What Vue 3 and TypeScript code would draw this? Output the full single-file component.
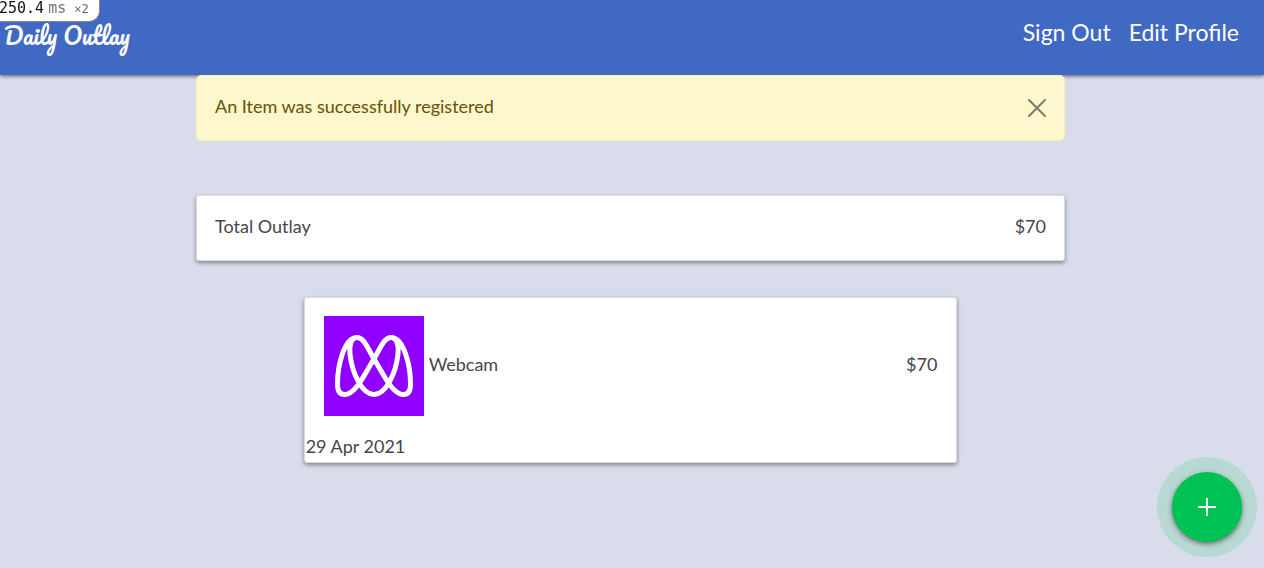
<script setup lang="ts">
import { ref } from 'vue'

interface Outlay {
  name: string
  amount: number
  date: string
}

const noticeOpen = ref(true)
const outlays: Outlay[] = [{ name: 'Webcam', amount: 70, date: '29 Apr 2021' }]
const total = outlays.reduce((sum, item) => sum + item.amount, 0)
</script>

<template>
  <div class="page">
    <div class="profiler">
      <span>250.4</span>
      <span class="unit">ms</span>
      <span class="count">×2</span>
    </div>

    <header class="navbar">
      <a class="brand" href="#">Daily Outlay</a>
      <nav class="links">
        <a href="#">Sign Out</a>
        <a href="#">Edit Profile</a>
      </nav>
    </header>

    <main class="content">
      <div v-if="noticeOpen" class="notice" role="alert">
        <span>An Item was successfully registered</span>
        <button class="close" type="button" aria-label="Close" @click="noticeOpen = false">
          <svg viewBox="0 0 18 18" aria-hidden="true">
            <path d="M1 1L17 17M17 1L1 17" />
          </svg>
        </button>
      </div>

      <section class="card total">
        <span>Total Outlay</span>
        <span>${{ total }}</span>
      </section>

      <article v-for="item in outlays" :key="item.name" class="card item">
        <div class="item-row">
          <svg class="picture" viewBox="0 0 100 100" aria-hidden="true">
            <rect width="100" height="100" fill="#8f00ff" />
            <path
              d="M33 21.5C20 21.5 13.5 50 13.5 68C13.5 75 16 78.5 20.5 78.5C32 78.5 41 57 50 43C57 31 60 21.5 67 21.5C80 21.5 86.5 50 86.5 68C86.5 75 84 78.5 79.5 78.5C68 78.5 59 57 50 43C43 31 40 21.5 33 21.5C27 21.5 25 30 26 38C28 57 38 78.5 50 78.5C62 78.5 72 57 74 38C75 30 73 21.5 67 21.5"
            />
          </svg>
          <span class="name">{{ item.name }}</span>
          <span class="amount">${{ item.amount }}</span>
        </div>
        <div class="date">{{ item.date }}</div>
      </article>
    </main>

    <button class="add" type="button" aria-label="Add item">
      <svg viewBox="0 0 18 18" aria-hidden="true">
        <path d="M9 0V18M0 9H18" />
      </svg>
    </button>
  </div>
</template>

<style>
body {
  margin: 0;
  background: #d9dcea;
}
</style>

<style scoped>
.page {
  min-height: 100vh;
  font-family: Lato, sans-serif;
  font-size: 18px;
  line-height: 27px;
  color: #444650;
}

.profiler {
  position: fixed;
  top: 0;
  left: -1px;
  z-index: 2;
  display: flex;
  gap: 4px;
  box-sizing: border-box;
  height: 22px;
  padding-right: 10px;
  border: 1px solid #888;
  border-width: 0 1px 1px 0;
  border-radius: 0 0 11px 0;
  background: #fff;
  color: #111;
  font-family: "DejaVu Sans Mono", monospace;
  font-size: 15px;
  line-height: 16px;
  white-space: nowrap;
}

.unit {
  color: #777;
}

.count {
  margin-left: 4px;
  color: #666;
  font-size: 12px;
  line-height: 18px;
}

.navbar {
  display: flex;
  justify-content: space-between;
  align-items: flex-start;
  box-sizing: border-box;
  height: 75px;
  padding: 15px 25px 0 4px;
  background: #4069c3;
  box-shadow: 0 1px 4px rgba(0, 0, 0, 0.6);
}

.navbar a {
  color: #fff;
  text-decoration: none;
}

.brand {
  font-family: Pacifico, Lato, cursive;
  font-size: 23px;
  line-height: 40px;
}

.links {
  display: flex;
  gap: 18px;
  font-size: 23px;
  line-height: 34px;
}

.content {
  position: relative;
  display: flex;
  flex-direction: column;
  max-width: 869px;
  margin: 0 auto;
  padding-right: 3px;
}

.notice {
  display: flex;
  justify-content: space-between;
  align-items: flex-start;
  padding: 17px 18px 20px;
  border: 1px solid #fdf0a8;
  border-radius: 5px;
  background: #fdf7cd;
  color: #665200;
}

.close {
  width: 18px;
  height: 18px;
  margin-top: 6px;
  padding: 0;
  border: 0;
  background: none;
  color: #7e7b67;
  cursor: pointer;
}

.close svg {
  display: block;
}

.close path {
  fill: none;
  stroke: currentColor;
  stroke-width: 2;
  stroke-linecap: round;
}

.card {
  border: 1px solid #dcdcdf;
  border-radius: 3px;
  background: #fff;
  box-shadow: 0 2px 4px rgba(0, 0, 0, 0.4);
}

.total {
  display: flex;
  justify-content: space-between;
  margin-top: 54px;
  padding: 17px 18px 20px;
}

.item {
  align-self: center;
  width: 75%;
  margin-top: 36px;
}

.item-row {
  display: flex;
  align-items: center;
  padding: 18px 19px 17px;
}

.picture {
  flex: none;
  width: 100px;
  height: 100px;
}

.picture path {
  fill: none;
  stroke: #fff;
  stroke-width: 5;
}

.name,
.amount {
  padding-bottom: 3px;
}

.name {
  flex: 1;
  margin-left: 5px;
}

.date {
  padding: 0 1px 2px;
}

.add {
  position: fixed;
  right: 22px;
  bottom: 26px;
  display: grid;
  place-items: center;
  width: 70px;
  height: 70px;
  padding: 0;
  border: 0;
  border-radius: 50%;
  background: #00c153;
  box-shadow: 0 2px 5px rgba(0, 0, 0, 0.5), 0 0 0 15px rgba(0, 193, 83, 0.15);
  color: #fff;
  cursor: pointer;
}

.add svg {
  width: 18px;
  height: 18px;
}

.add path {
  fill: none;
  stroke: currentColor;
  stroke-width: 2;
}
</style>
